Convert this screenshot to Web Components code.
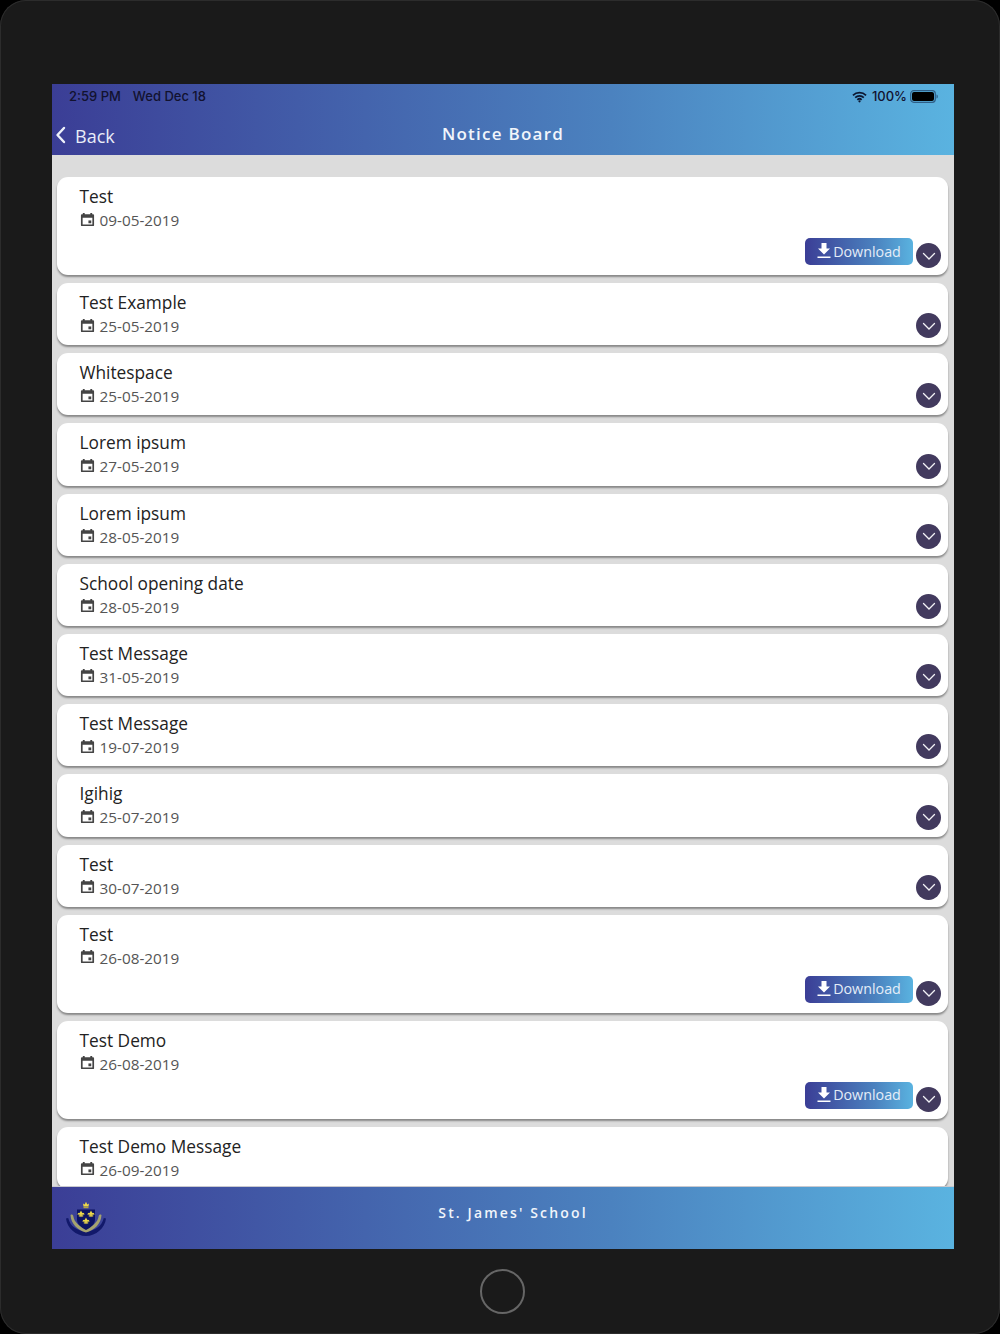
<!DOCTYPE html>
<html lang="en"><head><meta charset="utf-8"><title>Notice Board</title>
<style>
html,body{margin:0;padding:0;background:#000;height:1334px;overflow:hidden}
</style></head><body>
<device-frame>
  <app-header title="Notice Board"></app-header>
  <notice-list>
    <notice-card title="Test" date="09-05-2019" download></notice-card>
    <notice-card title="Test Example" date="25-05-2019"></notice-card>
    <notice-card title="Whitespace" date="25-05-2019"></notice-card>
    <notice-card title="Lorem ipsum" date="27-05-2019"></notice-card>
    <notice-card title="Lorem ipsum" date="28-05-2019"></notice-card>
    <notice-card title="School opening date" date="28-05-2019"></notice-card>
    <notice-card title="Test Message" date="31-05-2019"></notice-card>
    <notice-card title="Test Message" date="19-07-2019"></notice-card>
    <notice-card title="Igihig" date="25-07-2019"></notice-card>
    <notice-card title="Test" date="30-07-2019"></notice-card>
    <notice-card title="Test" date="26-08-2019" download></notice-card>
    <notice-card title="Test Demo" date="26-08-2019" download></notice-card>
    <notice-card title="Test Demo Message" date="26-09-2019" noexpand></notice-card>
  </notice-list>
  <app-footer name="St. James' School"></app-footer>
</device-frame>
<script>
const define=(name,html)=>{
  customElements.define(name,class extends HTMLElement{
    connectedCallback(){
      if(this.shadowRoot)return;
      const r=this.attachShadow({mode:'open'});
      r.innerHTML=typeof html==='function'?html(this):html;
    }
  });
};
const GRAD='linear-gradient(90deg,#3b3e96 0%,#4b82bf 62%,#5ab3e0 100%)';
define('device-frame',`<style>
:host{display:flex;flex-direction:column;align-items:flex-start;box-sizing:border-box;width:1000px;height:1334px;padding:84px 46px 0 52px;background:#1a1a1a;border-radius:26px;box-shadow:inset 0 0 0 1px #2c2c2c}
.screen{width:902px;height:1165px;display:flex;flex-direction:column;overflow:hidden;background:#dcdcdc}
.home{align-self:flex-start;margin:20px 0 0 428px;width:45px;height:45px;box-sizing:border-box;border:2.5px solid #666;border-radius:50%}
</style><div class="screen"><slot></slot></div><div class="home"></div>`);
define('status-bar',`<style>
:host{display:flex;align-items:center;height:25px;padding:0 15px 0 17px;font:500 13px/25px "Inter","Liberation Sans",sans-serif;color:#12122f}
.t{margin-right:12px}.sp{flex:1}
svg{display:block}
.pct{margin:0 3px 0 5px}
</style><span class="t">2:59 PM</span><span>Wed Dec 18</span><span class="sp"></span>
<svg width="15" height="12" viewBox="0 0 16 12"><path d="M1 4.200a10 10 0 0 1 14 0M3.400 6.700a6.600 6.600 0 0 1 9.200 0M5.700 9a3.300 3.300 0 0 1 4.600 0" fill="none" stroke="#0d1730" stroke-width="1.800"/><circle cx="8" cy="10.600" r="1.200" fill="#0d1730"/></svg>
<span class="pct">100%</span>
<svg width="29" height="13" viewBox="0 0 29 13"><rect x=".7" y=".7" width="24.600" height="11.600" rx="3" fill="none" stroke="#2f5f88" stroke-width="1.200"/><rect x="2" y="2" width="22" height="9" rx="2" fill="#000"/><path d="M26.500 4.500c1 .3 1.300 1 1.300 2s-.3 1.700-1.300 2z" fill="#2f5f88"/></svg>`);
define('app-header',h=>`<style>
:host{display:block;flex:none;height:71px;background:${GRAD};font-family:"Open Sans",sans-serif}
nav{display:grid;grid-template-columns:1fr auto 1fr;align-items:center;height:46px}
.back{display:flex;align-items:center;gap:9px;padding-left:3px;padding-top:4px;color:#e9ecf7;font-size:18px;line-height:46px}
.back svg{display:block;margin-top:-2px}
h1{margin:0;font-weight:600;font-size:17px;letter-spacing:1.250px;color:#f1f5fb;line-height:46px}
</style><status-bar></status-bar><nav><div class="back"><svg width="11" height="18" viewBox="0 0 11 18"><path d="M9 2 2.500 9 9 16" fill="none" stroke="#eef1fa" stroke-width="2.400" stroke-linecap="round" stroke-linejoin="round"/></svg><span>Back</span></div><h1>${h.getAttribute('title')}</h1><span></span></nav>`);
define('notice-list',`<style>
:host{display:flex;flex-direction:column;flex:1;min-height:0;overflow:hidden;padding:22px 6px 0 5px;box-sizing:border-box;gap:8px}
</style><slot></slot>`);
define('notice-card',c=>{const d=c.hasAttribute('download');return `<style>
:host{display:grid;grid-template-columns:1fr auto;grid-template-rows:minmax(0,1fr);flex:none;box-sizing:border-box;height:${d?'98px':'62.2px'};padding:8px 7px 7px 22.500px;background:#fff;border-radius:11px;box-shadow:0 2px 2px rgba(0,0,0,.38);font-family:"Open Sans",sans-serif}
.t{font-size:17.300px;line-height:23px;color:#222}
.d{display:flex;align-items:center;gap:5px;margin-top:1px;font-size:15.300px;line-height:22px;color:#555}
.d svg{display:block;margin-top:-2px}
.act{display:flex;align-items:flex-end;gap:3px}
</style><div><div class="t">${c.getAttribute('title')}</div><div class="d"><svg width="15" height="15" viewBox="0 0 16 16"><path fill="#444" d="M3 1h2v1.500h6V1h2v1.500h1c.6 0 1 .4 1 1v10.500c0 .6-.4 1-1 1H2c-.6 0-1-.4-1-1V3.500c0-.6.4-1 1-1h1zM2.800 6v7.200h10.400V6z"/><rect x="9" y="9" width="3" height="3" fill="#444"/></svg><span>${c.getAttribute('date')}</span></div></div><div class="act">${d?'<download-button></download-button>':''}${c.hasAttribute('noexpand')?'':'<expand-button></expand-button>'}</div>`});
define('download-button',`<style>
:host{display:flex;align-items:center;justify-content:center;gap:2px;box-sizing:border-box;width:108px;height:27px;margin-bottom:3px;border-radius:5px;background:linear-gradient(90deg,#3b3e96,#4b82bf 65%,#5ab3e0);color:#e4edf8;font:14.300px/25px "Open Sans",sans-serif}
svg{display:block;margin-top:-2px}
span{display:block;margin-top:-1px}
</style><svg width="14" height="17" viewBox="0 0 14 17"><path fill="#fff" d="M4.500 1h5v5.500H13L7 12.500 1 6.500h3.500zM.5 14.500h13V16H.5z"/></svg><span>Download</span>`);
define('expand-button',`<style>
:host{display:flex;align-items:center;justify-content:center;width:25px;height:25px;border-radius:50%;background:#423a5e}
svg{display:block;margin-top:1px}
</style><svg width="14" height="9" viewBox="0 0 14 9"><path d="M1.500 1.500 7 7l5.500-5.500" fill="none" stroke="#f2f2f6" stroke-width="1.300" stroke-linecap="round"/></svg>`);
const fleur=(x,y)=>`<g transform="translate(${x} ${y})" fill="#ecd84a"><path d="M0-4 1.300-1.500 0 3-1.300-1.500z"/><path d="M-.5-1C-2-2.500-3.600-1.500-3.300.4-2.500-.5-1.500-.2-.5 1zM.5-1C2-2.500 3.600-1.500 3.300.4 2.500-.5 1.500-.2.5 1z"/><rect x="-2.200" y=".8" width="4.400" height="1.200"/></g>`;
define('school-crest',`<style>:host{display:block;width:42px;height:36px}svg{display:block}</style>
<svg width="42" height="36" viewBox="0 0 42 36">
<path d="M1 17.500 3.200 17C5 25 12 30 21 30.500 30 30 37 25 38.800 17L41 17.500C40 27 31 35 21 35 11 35 2 27 1 17.500z" fill="#12196b"/>
<path d="M5.500 14c2-1 2.700 0 3 2 .8 5 6 9.500 12.500 12 6.500-2.500 11.700-7 12.500-12 .3-2 1-3 3-2-.5 9-7 15-15.500 17.500C12.500 29 6 23 5.500 14z" fill="#a5a36f"/>
<path d="M12 8.500h18v10c0 4.500-4 8-9 10.500-5-2.500-9-6-9-10.500z" fill="#0c1363"/>
<path d="M18.500 5.500 18 2.500l1.700 1L21 .8l1.300 2.700 1.700-1-.5 3z" fill="#ecd84a"/>
<rect x="18.500" y="5.700" width="5" height="1.500" fill="#b9a63a"/>
${fleur(16,13.500)}${fleur(26,13.500)}${fleur(21,20.500)}
</svg>`);
define('app-footer',f=>`<style>
:host{display:grid;grid-template-columns:auto 1fr;align-items:center;flex:none;height:62px;padding:0 0 0 13px;box-sizing:border-box;background:${GRAD};font-family:"Open Sans",sans-serif;box-shadow:0 -1px 0 #c9c9cf}
span{text-align:center;padding-right:35px;margin-top:-11px;font-size:14px;font-weight:600;letter-spacing:2.150px;color:#f1f5fb}
school-crest{margin-top:1px}
</style><school-crest></school-crest><span>${f.getAttribute('name')}</span>`);
</script>
</body></html>
